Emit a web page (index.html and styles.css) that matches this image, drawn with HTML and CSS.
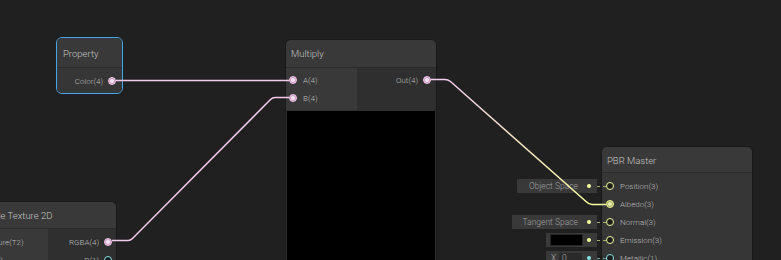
FILE: index.html
```html
<!DOCTYPE html>
<html lang="en">
<head>
    <meta charset="UTF-8">
    <meta name="viewport" content="width=device-width, initial-scale=1.0">
    <title>Shader Graph</title>
    <link rel="stylesheet" href="styles.css">
</head>
<body>
    <div class="graph">
        <!-- Property node (selected) -->
        <div class="node node-property selected">
            <div class="node-title">Property</div>
            <div class="node-body">
                <div class="col col-out full">
                    <div class="slot out"><span>Color(4)</span><i class="port v4 on"></i></div>
                </div>
            </div>
        </div>

        <!-- Multiply node -->
        <div class="node node-multiply">
            <div class="node-title">Multiply</div>
            <div class="node-body">
                <div class="col col-in">
                    <div class="slot in"><i class="port v4 on"></i><span>A(4)</span></div>
                    <div class="slot in"><i class="port v4 on"></i><span>B(4)</span></div>
                </div>
                <div class="col col-out">
                    <div class="slot out"><span>Out(4)</span><i class="port v4 on"></i></div>
                </div>
            </div>
            <div class="preview"></div>
        </div>

        <!-- Sample Texture 2D node -->
        <div class="node node-sample">
            <div class="node-title">Sample Texture 2D</div>
            <div class="node-body">
                <div class="col col-in">
                    <div class="slot in"><i class="port tex"></i><span>Texture(T2)</span></div>
                    <div class="slot in"><i class="port v2"></i><span>UV(2)</span></div>
                </div>
                <div class="col col-out">
                    <div class="slot out"><span>RGBA(4)</span><i class="port v4 on"></i></div>
                    <div class="slot out"><span>R(1)</span><i class="port v1"></i></div>
                </div>
            </div>
        </div>

        <!-- PBR Master node -->
        <div class="node node-master">
            <div class="node-title">PBR Master</div>
            <div class="node-body">
                <div class="col col-in full">
                    <div class="slot in"><i class="port v3"></i><span>Position(3)</span></div>
                    <div class="slot in"><i class="port v3 on"></i><span>Albedo(3)</span></div>
                    <div class="slot in"><i class="port v3"></i><span>Normal(3)</span></div>
                    <div class="slot in"><i class="port v3"></i><span>Emission(3)</span></div>
                    <div class="slot in"><i class="port v1"></i><span>Metallic(1)</span></div>
                </div>
            </div>
        </div>

        <!-- default values for PBR Master inputs -->
        <div class="defaults">
            <div class="default-row">
                <div class="field wide"><span>Object Space</span><i class="dot v3"></i></div>
                <i class="link v3"></i>
            </div>
            <div class="default-row empty"></div>
            <div class="default-row">
                <div class="field wider"><span>Tangent Space</span><i class="dot v3"></i></div>
                <i class="link v3"></i>
            </div>
            <div class="default-row">
                <div class="field small"><b class="swatch"></b><i class="dot v3"></i></div>
                <i class="link v3"></i>
            </div>
            <div class="default-row">
                <div class="field small"><span class="axis">X</span><b class="num">0</b><i class="dot v1"></i></div>
                <i class="link v1"></i>
            </div>
        </div>

        <svg class="edges" width="781" height="260" viewBox="0 0 781 260">
            <defs>
                <linearGradient id="outToAlbedo" gradientUnits="userSpaceOnUse" x1="445" y1="80" x2="590" y2="204">
                    <stop offset="0" stop-color="#f7cdf1"/>
                    <stop offset="1" stop-color="#f6ff9a"/>
                </linearGradient>
            </defs>
            <path class="edge v4" d="M116 80.5 L289 80.5"/>
            <path class="edge v4" d="M112 240.5 L128 240.5 Q130.5 240.5 132.5 238.5 L270.5 99.5 Q272.5 97.5 275 97.5 L289 97.5"/>
            <path class="edge" stroke="url(#outToAlbedo)" d="M431 79.5 L445 79.5 Q448 79.5 450.5 81.5 L586 201.5 Q589 204.5 592 204.5 L606 204.5"/>
        </svg>
    </div>
</body>
</html>
```

FILE: styles.css
```css
/* Canvas */
body {
    margin: 0;
    padding: 0;
    background: #202020;
    font-family: Roboto, 'Liberation Sans', sans-serif;
}

.graph {
    position: relative;
    width: 781px;
    height: 260px;
    overflow: hidden;
    background: #202020;
}

/* Nodes */
.node {
    position: absolute;
    box-sizing: border-box;
    background: #2e2e2e;
    border: 1px solid #191919;
    border-radius: 6px;
    overflow: hidden;
    display: flex;
    flex-direction: column;
}

.node.selected {
    border-color: #44a6ea;
    box-shadow: inset 0 0 0 1px #1b1b1b;
}

.node-title {
    flex: none;
    display: flex;
    align-items: center;
    padding: 0 7px;
    background: #393939;
    border-bottom: 1px solid #2b2b2b;
    font-size: 9.5px;
    font-weight: 300;
    color: #c4c4c4;
    white-space: nowrap;
}

.node-body {
    flex: none;
    display: flex;
}

.col {
    display: flex;
    flex-direction: column;
    padding: 3px 0;
}

.col-in {
    background: #393939;
}

.col-out {
    flex: 1;
    background: #2f2f2f;
}

.col.full {
    flex: 1;
}

.slot {
    height: 18px;
    display: flex;
    align-items: center;
    font-size: 8px;
    font-weight: 300;
    color: #bcbcbc;
    white-space: nowrap;
}

.slot.in {
    padding-left: 3px;
    gap: 6px;
}

.slot.out {
    justify-content: flex-end;
    padding-right: 5px;
    gap: 5px;
}

/* Ports */
.port {
    flex: none;
    box-sizing: border-box;
    width: 8px;
    height: 8px;
    border-radius: 50%;
    border: 1px solid #888;
    background: #1c1c1c;
}

.port.v4 { border-color: #fbcbf4; }
.port.v3 { border-color: #f6ff9a; }
.port.v2 { border-color: #9aef92; }
.port.v1 { border-color: #84e4e7; }
.port.tex { border-color: #ff8b8b; }

.port.v4.on {
    background: radial-gradient(circle, #f6e4f2 0 1.5px, #c79bc0 2.5px);
}

.port.v3.on {
    background: radial-gradient(circle, #e8eeaa 0 1.5px, #9ea05e 2.5px);
}

/* Property */
.node-property {
    left: 56px;
    top: 37px;
    width: 67px;
    height: 57px;
}

.node-property .node-title {
    height: 30px;
    padding-left: 6px;
    padding-top: 1px;
    box-sizing: border-box;
}

.node-property .node-body {
    flex: 1;
    background: #363636;
}

.node-property .col-out {
    background: #363636;
    padding: 4px 0;
}

.node-property .slot.out {
    padding-right: 6px;
}

/* Multiply */
.node-multiply {
    left: 285px;
    top: 39px;
    width: 152px;
    height: 240px;
}

.node-multiply .node-title {
    height: 27px;
    padding-left: 5px;
}

.node-multiply .col-in {
    width: 71px;
}

.preview {
    flex: 1;
    margin: 1px 1px 0;
    background: #000;
}

/* Sample Texture 2D */
.node-sample {
    left: -35px;
    top: 201px;
    width: 152px;
    height: 90px;
}

.node-sample .node-title {
    height: 26px;
    padding-left: 8px;
}

.node-sample .col-in {
    width: 82px;
    padding-top: 4px;
}

.node-sample .col-out {
    padding-top: 4px;
}

.node-sample .slot.out {
    padding-right: 4px;
}

/* PBR Master */
.node-master {
    left: 601px;
    top: 146px;
    width: 152px;
    height: 140px;
}

.node-master .node-title {
    padding-left: 5px;
    padding-top: 2px;
    box-sizing: border-box;
    height: 26px;
}

.node-master .col-in {
    padding-top: 4px;
    background: #363636;
}

.node-master .slot.in {
    padding-left: 4px;
}

/* Default value fields */
.defaults {
    position: absolute;
    top: 177px;
    right: 175px;
    display: flex;
    flex-direction: column;
    align-items: flex-end;
}

.default-row {
    height: 18px;
    display: flex;
    align-items: center;
}

.field {
    box-sizing: border-box;
    height: 14px;
    display: flex;
    align-items: center;
    justify-content: flex-end;
    gap: 9px;
    padding-right: 6px;
    background: #393939;
    font-size: 8.5px;
    font-weight: 300;
    color: #a0a0a0;
    white-space: nowrap;
}

.field.wide { width: 80px; }
.field.wider { width: 85px; }

.field.small {
    width: 51px;
    gap: 5px;
    justify-content: flex-start;
    padding-left: 5px;
}

.swatch {
    width: 31px;
    height: 10px;
    background: #000;
    box-shadow: 0 0 0 1px #262626;
}

.field .axis {
    width: 6px;
    color: #b0b0b0;
}

.num {
    width: 23px;
    height: 10px;
    margin-left: -3px;
    padding-left: 3px;
    box-sizing: border-box;
    background: #2a2a2a;
    font-weight: 300;
    line-height: 10px;
    color: #b8b8b8;
}

.dot {
    flex: none;
    width: 4px;
    height: 4px;
    border-radius: 50%;
}

.dot.v3 { background: #f6ff9a; }
.dot.v1 { background: #84e4e7; }

.link {
    width: 9px;
    height: 0;
    border-top: 1px dashed #a7ad6c;
}

.link.v1 {
    border-top-color: #5fa3a5;
}

/* Edges */
.edges {
    position: absolute;
    left: 0;
    top: 0;
    pointer-events: none;
}

.edge {
    fill: none;
    stroke-width: 1.5;
}

.edge.v4 {
    stroke: #f5c8ee;
}
```
